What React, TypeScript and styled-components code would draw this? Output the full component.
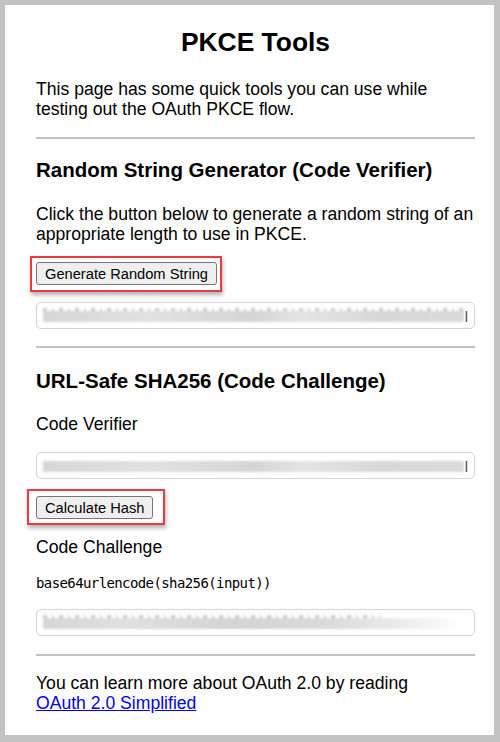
import React from "react";
import styled, { createGlobalStyle } from "styled-components";

const Global = createGlobalStyle`
  html, body { margin: 0; padding: 0; background: #c3c3c3; }
  body { font-family: "Liberation Sans", Arial, sans-serif; color: #000; }
`;

const Frame = styled.div`
  box-sizing: border-box;
  width: 500px;
  height: 742px;
  padding: 5px 6px 7px 5px;
  background: #c3c3c3;
`;

const Card = styled.main`
  box-sizing: border-box;
  height: 100%;
  background: #fff;
  padding: 0 19px 0 31px;
  display: flex;
  flex-direction: column;
  align-items: flex-start;
`;

const Title = styled.h1`
  align-self: stretch;
  margin: 22px 0 0;
  font-size: 26.4px;
  line-height: 30px;
  font-weight: bold;
  text-align: center;
`;

const Para = styled.p<{ $mt: number }>`
  margin: ${(p) => p.$mt}px 0 0;
  font-size: 17.6px;
  line-height: 20px;
`;

const Heading = styled.h3<{ $mt: number }>`
  margin: ${(p) => p.$mt}px 0 0;
  font-size: 20.5px;
  line-height: 24px;
  font-weight: bold;
`;

const Rule = styled.hr<{ $mt: number }>`
  align-self: stretch;
  margin: ${(p) => p.$mt}px 0 0;
  height: 2px;
  border: 0;
  background: #c2c2c2;
`;

const Mono = styled.code<{ $mt: number }>`
  display: block;
  margin-top: ${(p) => p.$mt}px;
  font-family: "DejaVu Sans Mono", "Liberation Mono", monospace;
  font-size: 14px;
  letter-spacing: -0.6px;
  line-height: 16px;
`;

const ButtonWrap = styled.div<{ $mt: number }>`
  position: relative;
  display: inline-block;
  margin-top: ${(p) => p.$mt}px;
`;

const Annotation = styled.span<{ $t: number; $r: number; $b: number; $l: number }>`
  position: absolute;
  top: ${(p) => -p.$t}px;
  right: ${(p) => -p.$r}px;
  bottom: ${(p) => -p.$b}px;
  left: ${(p) => -p.$l}px;
  border: 2px solid #ea3b40;
  box-shadow: 1px 3px 4px rgba(0, 0, 0, 0.3);
  pointer-events: none;
`;

const Button = styled.button`
  display: block;
  box-sizing: border-box;
  height: 23px;
  padding: 0 8px;
  font-family: "Liberation Sans", Arial, sans-serif;
  font-size: 14.67px;
  color: #000;
  background: #efefef;
  border: 1px solid #767676;
  border-radius: 3px;
`;

const Field = styled.div<{ $mt: number }>`
  box-sizing: border-box;
  align-self: stretch;
  margin-top: ${(p) => p.$mt}px;
  height: 27px;
  border: 1px solid #d4d4d4;
  border-radius: 5px;
  padding: 0 6px 0 6px;
  display: flex;
  align-items: center;
  gap: 1px;
`;

const Smudge = styled.div<{ $dots?: boolean; $fade?: boolean }>`
  position: relative;
  flex: 1;
  height: 11px;
  margin-top: 2px;
  background: ${(p) =>
    p.$fade
      ? "linear-gradient(90deg, #d6d6d6 0%, #e0e0e0 20%, #d4d4d4 45%, #dadada 68%, #ebebeb 84%, rgba(255,255,255,0) 100%)"
      : "linear-gradient(90deg, #d6d6d6 0%, #e1e1e1 25%, #d5d5d5 50%, #e4e4e4 62%, #d7d7d7 80%, #dadada 100%)"};
  filter: blur(1.2px);
  &::before {
    content: "";
    display: ${(p) => (p.$dots ? "block" : "none")};
    position: absolute;
    left: 0;
    right: ${(p) => (p.$fade ? "20%" : "0")};
    top: -3px;
    height: 3px;
    background: repeating-linear-gradient(
      90deg,
      #8f8f8f 0 4px,
      transparent 4px 9px,
      #a5a5a5 9px 11px,
      transparent 11px 16px
    );
    opacity: 0.45;
  }
`;

const Tail = styled.span<{ $hidden?: boolean }>`
  font-family: "Liberation Sans", Arial, sans-serif;
  font-size: 14.67px;
  line-height: 14px;
  color: #3a4f66;
  margin-top: 2px;
  visibility: ${(p) => (p.$hidden ? "hidden" : "visible")};
`;

const Link = styled.a`
  color: #0000ee;
  text-decoration: underline;
`;

export default function App() {
  return (
    <>
      <Global />
      <Frame>
        <Card>
          <Title>PKCE Tools</Title>
          <Para $mt={22}>
            This page has some quick tools you can use while testing out the OAuth PKCE flow.
          </Para>
          <Rule $mt={18} />
          <Heading $mt={19}>Random String Generator (Code Verifier)</Heading>
          <Para $mt={22}>
            Click the button below to generate a random string of an appropriate length to use in PKCE.
          </Para>
          <ButtonWrap $mt={18}>
            <Button>Generate Random String</Button>
            <Annotation $t={6} $r={5} $b={7} $l={6} />
          </ButtonWrap>
          <Field $mt={17}>
            <Smudge $dots />
            <Tail>l</Tail>
          </Field>
          <Rule $mt={17} />
          <Heading $mt={21}>URL-Safe SHA256 (Code Challenge)</Heading>
          <Para $mt={21}>Code Verifier</Para>
          <Field $mt={18}>
            <Smudge />
            <Tail>l</Tail>
          </Field>
          <ButtonWrap $mt={17}>
            <Button>Calculate Hash</Button>
            <Annotation $t={7} $r={12} $b={6} $l={9} />
          </ButtonWrap>
          <Para $mt={18}>Code Challenge</Para>
          <Mono $mt={18}>base64urlencode(sha256(input))</Mono>
          <Field $mt={18}>
            <Smudge $dots $fade />
            <Tail $hidden>l</Tail>
          </Field>
          <Rule $mt={18} />
          <Para $mt={17}>
            You can learn more about OAuth 2.0 by reading
            <br />
            <Link href="#">OAuth 2.0 Simplified</Link>
          </Para>
        </Card>
      </Frame>
    </>
  );
}
